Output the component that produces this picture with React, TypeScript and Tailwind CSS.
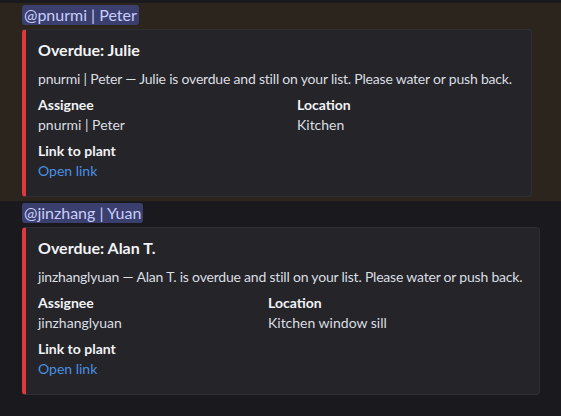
const font = { fontFamily: 'Lato, "Noto Sans", sans-serif' };

type Alert = {
  mention: string;
  plant: string;
  assignee: string;
  location: string;
  width: string;
  cols: string;
  highlight: boolean;
};

const alerts: Alert[] = [
  {
    mention: "@pnurmi | Peter",
    plant: "Julie",
    assignee: "pnurmi | Peter",
    location: "Kitchen",
    width: "w-[510px]",
    cols: "grid-cols-[259px_1fr]",
    highlight: true,
  },
  {
    mention: "@jinzhang | Yuan",
    plant: "Alan T.",
    assignee: "jinzhanglyuan",
    location: "Kitchen window sill",
    width: "w-[518px]",
    cols: "grid-cols-[230px_1fr]",
    highlight: false,
  },
];

const Message = ({ a }: { a: Alert }) => (
  <div className={`pl-[22px] pt-[2px] pb-[4px] ${a.highlight ? "bg-[#2b251e]" : ""}`}>
    <div className="w-fit rounded-[3px] bg-[#3a3f6e] px-[2px] text-[16px] leading-[20px] text-[#c9cdfb]">
      {a.mention}
    </div>
    <div
      className={`mt-[4px] ${a.width} rounded-[4px] border border-[#2e2e34] border-l-4 border-l-[#e0383d] bg-[#242429] pl-[12px] pr-[16px] pt-[9px] pb-[15px]`}
    >
      <div className="text-[16px] font-bold leading-[22px] text-[#f2f3f5]">Overdue: {a.plant}</div>
      <div className="mt-[8px] whitespace-nowrap text-[14px] leading-[20px] tracking-[-0.2px] text-[#dbdee1]">
        {a.assignee} — {a.plant} is overdue and still on your list. Please water or push back.
      </div>
      <div className={`mt-[6px] grid ${a.cols} gap-y-[6px] text-[14px] leading-[20px]`}>
        <div>
          <div className="font-bold text-[#f2f3f5]">Assignee</div>
          <div className="text-[#dbdee1]">{a.assignee}</div>
        </div>
        <div>
          <div className="font-bold text-[#f2f3f5]">Location</div>
          <div className="text-[#dbdee1]">{a.location}</div>
        </div>
        <div className="col-span-2">
          <div className="font-bold text-[#f2f3f5]">Link to plant</div>
          <div className="text-[#4a90e2]">Open link</div>
        </div>
      </div>
    </div>
  </div>
);

export default function App() {
  return (
    <div className="min-h-screen bg-[#1a1a1e] pt-[3px]" style={font}>
      {alerts.map((a) => (
        <Message key={a.mention} a={a} />
      ))}
    </div>
  );
}
